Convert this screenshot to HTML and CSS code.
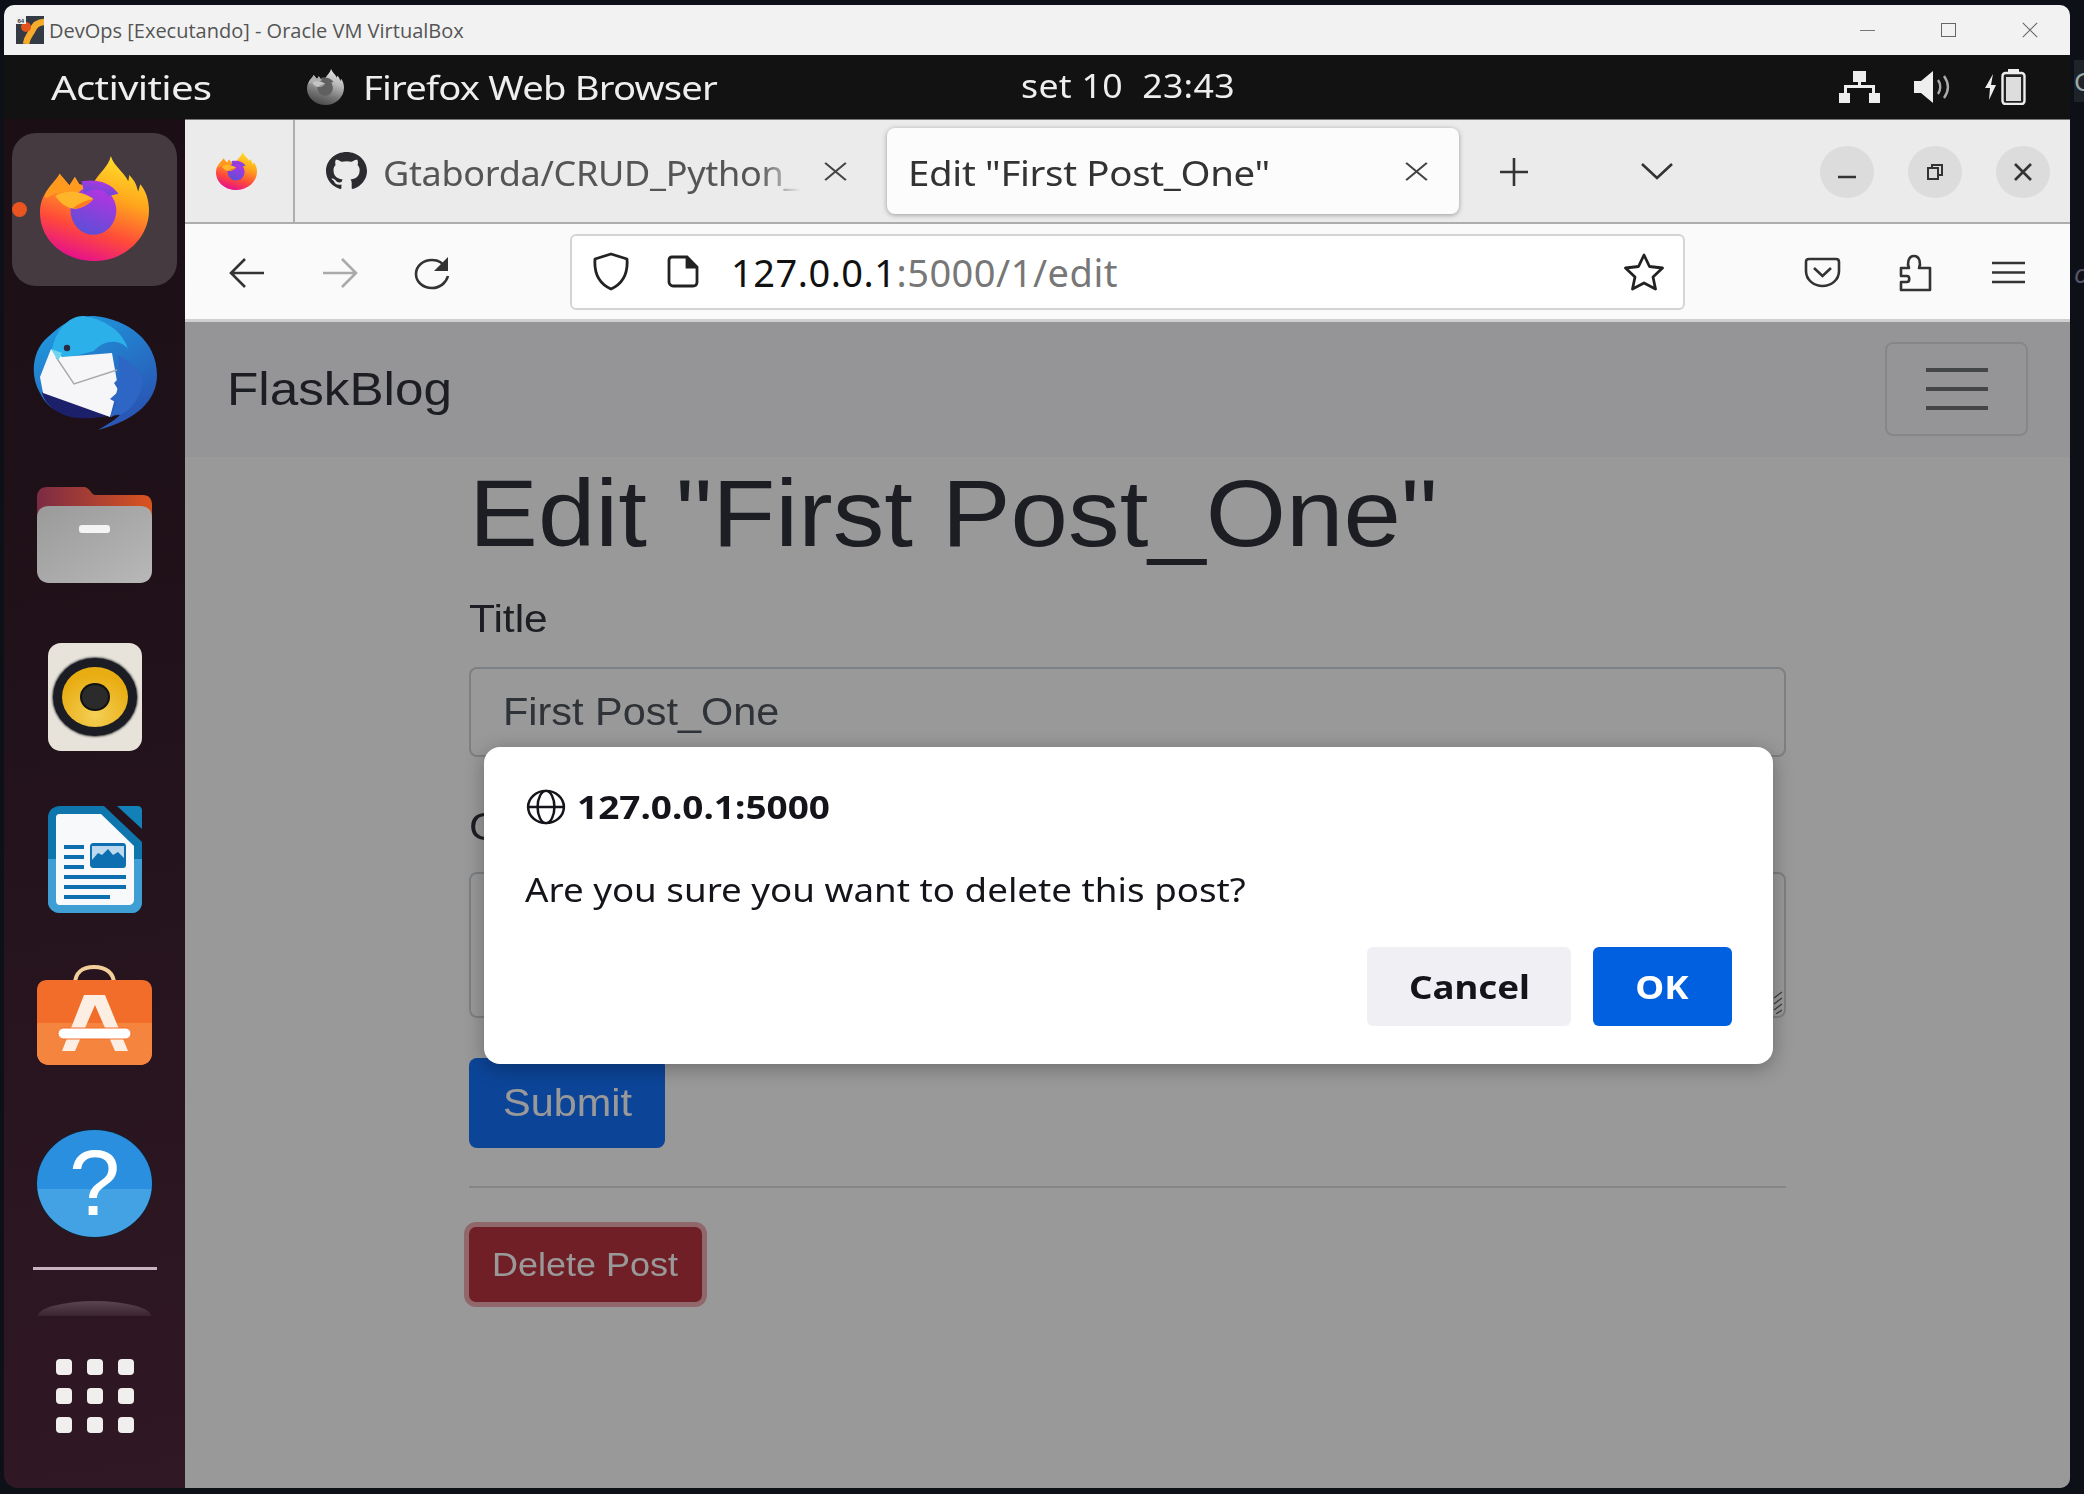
FILE: index.html
```html
<!DOCTYPE html>
<html lang="pt">
<head>
<meta charset="utf-8">
<title>DevOps [Executando] - Oracle VM VirtualBox</title>
<link rel="stylesheet" href="styles.css">
</head>
<body>
<svg class="defs" width="0" height="0" aria-hidden="true">
  <defs>
    <linearGradient id="ffBody" x1="0.75" y1="0" x2="0.4" y2="1">
      <stop offset="0" stop-color="#ffe32a"/><stop offset="0.38" stop-color="#ffa51c"/>
      <stop offset="0.72" stop-color="#ff4a3a"/><stop offset="1" stop-color="#e6128a"/>
    </linearGradient>
    <linearGradient id="ffGlobe" x1="0.7" y1="0" x2="0.3" y2="1">
      <stop offset="0" stop-color="#b833e1"/><stop offset="1" stop-color="#5a4fd6"/>
    </linearGradient>
    <linearGradient id="tbBlue" x1="0.2" y1="0" x2="0.8" y2="1">
      <stop offset="0" stop-color="#1f9be0"/><stop offset="1" stop-color="#2a4fb0"/>
    </linearGradient>
    <linearGradient id="folderTab" x1="0" y1="0" x2="1" y2="0">
      <stop offset="0" stop-color="#7b2b44"/><stop offset="1" stop-color="#d95420"/>
    </linearGradient>
    <linearGradient id="folderBody" x1="0" y1="0" x2="1" y2="1">
      <stop offset="0" stop-color="#9a9a9a"/><stop offset="1" stop-color="#b8b8b8"/>
    </linearGradient>
    <symbol id="firefox" viewBox="0 0 100 100" preserveAspectRatio="none">
      <path fill="url(#ffBody)" d="M65 0C63 10 54 16 49 26L52 30 36 27 32 20 27 28 18 17C16 24 12 27 8 31 2 38 0 46 0 54 0 80 22 100 50 100 78 100 100 78 100 52 100 42 97 33 92 27L90 34C88 24 85 22 82 18L81 24C76 14 68 10 65 0Z"/>
      <path fill="#ff9a1f" d="M18 17C14 24 8 29 5 36 3 44 8 38 14 36 24 33 36 36 48 38L50 32 36 27 32 20 27 28Z"/>
      <ellipse cx="49" cy="52" rx="21" ry="23" fill="url(#ffGlobe)"/>
      <path fill="#ffb52a" d="M14 38C24 32 38 33 49 41 44 47 36 51 30 50 24 49 19 45 14 38Z"/>
      <path fill="#ff7a1f" d="M30 50C36 51 44 47 49 41 40 43 34 46 30 50Z"/>
      <path fill="url(#ffGlobe)" d="M38 24C50 22 64 24 72 36L63 38C58 30 48 30 41 36Z"/>
    </symbol>
    <symbol id="cross" viewBox="0 0 20 20" preserveAspectRatio="none">
      <path d="M1 1 19 19M19 1 1 19" fill="none" stroke="currentColor" stroke-width="2"/>
    </symbol>
  </defs>
</svg>

<div class="backdrop-tag backdrop-tag-top">G</div>
<div class="backdrop-tag backdrop-tag-mid">o</div>

<div class="window">
  <header class="titlebar">
    <svg class="vbox-icon" viewBox="0 0 28 28" aria-hidden="true">
      <rect width="28" height="28" fill="#333a44"/>
      <path d="M28 6C21 6 18 10 16 15 14 19 11 21 10 28" fill="none" stroke="#f6ab2a" stroke-width="6.5"/>
      <circle cx="10" cy="11" r="5" fill="#e2541e"/>
      <rect width="10" height="8" fill="#eee"/>
      <text class="vbox-tag" x="1.500" y="6.500">64</text>
    </svg>
    <span class="titlebar-text">DevOps [Executando] - Oracle VM VirtualBox</span>
    <div class="win-controls">
      <span class="win-min"></span>
      <span class="win-max"></span>
      <svg class="win-close" viewBox="0 0 20 20" aria-hidden="true"><path d="M1 1 19 19M19 1 1 19" fill="none" stroke="#666" stroke-width="1.3"/></svg>
    </div>
  </header>

  <div class="panel">
    <span class="panel-activities">Activities</span>
    <div class="panel-app">
      <svg class="panel-ff" aria-hidden="true"><use href="#firefox"/></svg>
      <span class="panel-app-name">Firefox Web Browser</span>
    </div>
    <span class="panel-clock">set 10&nbsp; 23:43</span>
    <div class="panel-status">
      <svg class="st-net" viewBox="0 0 41 32" aria-hidden="true">
        <path fill="#eee" d="M14 0H27V11H22V14H36V22H41V32H30V22H33V17H8V22H11V32H0V22H5V14H19V11H14Z"/>
      </svg>
      <svg class="st-vol" viewBox="0 0 39 34" aria-hidden="true">
        <path fill="#eee" d="M0 11H7L19 1V33L7 23H0Z"/>
        <path fill="none" stroke="#aaa" stroke-width="2.4" d="M24 10C27 14 27 20 24 24M30 6C35 13 35 21 30 28"/>
      </svg>
      <svg class="st-bat" viewBox="0 0 42 36" aria-hidden="true">
        <path fill="#eee" d="M8 5 0 19H5L4 31 11 16H6Z"/>
        <rect x="17.5" y="4" width="22" height="31" rx="3" fill="#222" stroke="#eee" stroke-width="2.4"/>
        <rect x="23" y="0" width="11" height="4" fill="#eee"/>
        <rect x="21" y="8" width="15" height="24" fill="#ddd"/>
      </svg>
    </div>
  </div>

  <div class="desktop">
    <nav class="dock">
      <div class="dock-slot dock-active">
        <span class="dock-dot"></span>
        <svg class="ic-firefox" aria-hidden="true"><use href="#firefox"/></svg>
      </div>
      <div class="dock-slot dock-thunder">
        <svg class="ic-thunder" viewBox="0 0 125 115" aria-hidden="true">
          <path fill="url(#tbBlue)" d="M62 1C96 4 125 26 125 60 125 85 105 105 66 115 78 108 84 104 88 100 60 102 22 108 8 78 -3 60 1 34 16 22 28 10 44 0 62 1Z"/>
          <path fill="#1c1f6a" d="M10 78C14 92 30 102 46 103 58 104 72 102 78 100L12 74Z"/>
          <path fill="#2bb0ea" d="M20 36C22 18 36 0 52 1 70 4 90 14 96 34 88 24 72 24 62 36L30 44Z"/>
          <path fill="#f6f6f8" d="M8 62 19 34 30 42 80 38 86 72 78 102 11 78Z"/>
          <path fill="none" stroke="#a9a9a9" stroke-width="1.4" d="M24 42 42 69 85 55"/>
          <path fill="#70d4ee" d="M19 34 30 38 26 46Z"/>
          <circle cx="35" cy="33" r="3.2" fill="#2a2a44"/>
          <path fill="#2d66c4" d="M86 40C92 44 103 48 110 62 112 80 98 96 88 100 84 96 80 104 78 102L85 88 78 84 87 76 82 68 88 62Z"/>
        </svg>
      </div>
      <div class="dock-slot dock-files">
        <svg class="ic-folder" viewBox="0 0 115 96" aria-hidden="true">
          <path fill="url(#folderTab)" d="M0 10C0 4 4 0 10 0H46C50 0 52 2 54 5 56 8 58 8 60 8H106C112 8 115 12 115 18V40H0Z"/>
          <path fill="url(#folderBody)" d="M12 19H103C110 19 115 23 115 30V84C115 91 110 96 103 96H12C5 96 0 91 0 84V30C0 23 5 19 12 19Z"/>
          <rect x="42" y="38" width="31" height="8" rx="3" fill="#f4f4f4"/>
        </svg>
      </div>
      <div class="dock-slot dock-rhythm">
        <div class="rhythm-box"><span class="rhythm-ring"><span class="rhythm-cone"><span class="rhythm-cap"></span></span></span></div>
      </div>
      <div class="dock-slot dock-writer">
        <svg class="ic-writer" viewBox="0 0 94 107" aria-hidden="true">
          <path fill="#0e76ad" d="M12 0H56L94 36V96C94 102 90 107 84 107H12C5 107 0 102 0 96V11C0 5 5 0 12 0Z"/>
          <path fill="#3f9fd4" d="M0 53H94V96C94 102 90 107 84 107H12C5 107 0 102 0 96Z"/>
          <path fill="#f7f9fb" d="M12 8H53L86 40V93C86 97 84 99 80 99H12C9 99 8 97 8 94V12C8 9 9 8 12 8Z"/>
          <path fill="#1380b8" d="M69 0H90C92 0 94 2 94 4V23Z"/>
          <g fill="#0e6fb0">
            <rect x="16" y="39" width="20" height="4"/><rect x="16" y="49" width="20" height="4"/><rect x="16" y="59" width="20" height="4"/>
            <rect x="16" y="69" width="62" height="4"/><rect x="16" y="79" width="62" height="4"/><rect x="16" y="89" width="46" height="4"/>
            <path d="M42 41C42 38 43 37 46 37H75C77 37 78 38 78 41V58C78 61 77 62 75 62H46C43 62 42 61 42 58Z"/>
          </g>
          <path fill="#bcd9ee" d="M44 40H76V52L70 46 65 49 60 43 54 49 50 47 44 54Z"/>
        </svg>
      </div>
      <div class="dock-slot dock-soft">
        <svg class="ic-soft" viewBox="0 0 115 100" aria-hidden="true">
          <path fill="none" stroke="#f2cf9a" stroke-width="4" d="M38 19C38 8 45 2 57 2 69 2 77 8 77 19"/>
          <path fill="#f26d2a" d="M10 15H105C111 15 115 19 115 25V88C115 95 110 100 103 100H12C5 100 0 95 0 88V25C0 19 4 15 10 15Z"/>
          <path fill="#f5843f" d="M0 58H115V88C115 95 110 100 103 100H12C5 100 0 95 0 88Z"/>
          <path fill="#fdeee3" d="M47 30H68L91 86H78L58 40 38 86H25Z"/>
          <rect x="21" y="63" width="73" height="11" rx="5.5" fill="#fff" stroke="#f26d2a" stroke-width="1"/>
        </svg>
      </div>
      <div class="dock-slot dock-help">
        <div class="help-ball">?</div>
      </div>
      <div class="dock-divider"></div>
      <div class="dock-arc"></div>
      <div class="dock-grid">
        <i></i><i></i><i></i><i></i><i></i><i></i><i></i><i></i><i></i>
      </div>
    </nav>

    <main class="browser">
      <div class="tabbar">
        <div class="tab-ff">
          <svg class="tab-ff-ic" aria-hidden="true"><use href="#firefox"/></svg>
        </div>
        <div class="tab tab-inactive">
          <svg class="gh" viewBox="0 0 16 16" preserveAspectRatio="none" aria-hidden="true">
            <path fill="#2b2b30" d="M8 0C3.58 0 0 3.58 0 8c0 3.54 2.29 6.53 5.47 7.59.4.07.55-.17.55-.38v-1.49c-2.01.37-2.53-.49-2.69-.94-.09-.23-.48-.94-.82-1.13-.28-.15-.68-.52-.01-.53.63-.01 1.08.58 1.23.82.72 1.21 1.87.87 2.33.66.07-.52.28-.87.51-1.07-1.78-.2-3.64-.89-3.64-3.95 0-.87.31-1.59.82-2.15-.08-.2-.36-1.02.08-2.12 0 0 .67-.21 2.2.82a7.4 7.4 0 0 1 4 0c1.53-1.04 2.2-.82 2.2-.82.44 1.1.16 1.92.08 2.12.51.56.82 1.27.82 2.15 0 3.07-1.87 3.75-3.65 3.95.29.25.54.73.54 1.48v2.2c0 .21.15.46.55.38A8 8 0 0 0 16 8c0-4.42-3.58-8-8-8z"/>
          </svg>
          <span class="tab-title tab-title-fade">Gtaborda/CRUD_Python_</span>
          <svg class="tab-x" aria-hidden="true"><use href="#cross"/></svg>
        </div>
        <div class="tab tab-active">
          <span class="tab-title">Edit "First Post_One"</span>
          <svg class="tab-x" aria-hidden="true"><use href="#cross"/></svg>
        </div>
        <svg class="tab-plus" viewBox="0 0 32 30" aria-hidden="true"><path d="M16 1V29M2 15H30" fill="none" stroke="#333" stroke-width="2.6"/></svg>
        <svg class="tab-chev" viewBox="0 0 34 18" aria-hidden="true"><path d="M2 2 17 16 32 2" fill="none" stroke="#333" stroke-width="2.6"/></svg>
        <div class="tab-btns">
          <span class="tab-btn"><svg viewBox="0 0 24 24" aria-hidden="true"><path d="M3 17H21" stroke="#333" stroke-width="2.6"/></svg></span>
          <span class="tab-btn"><svg viewBox="0 0 24 24" aria-hidden="true"><path d="M5 8H15V19H5ZM9 8V5H19V15H15" fill="none" stroke="#333" stroke-width="2"/></svg></span>
          <span class="tab-btn"><svg viewBox="0 0 24 24" aria-hidden="true"><path d="M4 4 20 20M20 4 4 20" stroke="#333" stroke-width="2.6"/></svg></span>
        </div>
      </div>

      <div class="navbar-moz">
        <svg class="nv nv-back" viewBox="0 0 38 32" aria-hidden="true"><path d="M36 16H3M17 2 3 16 17 30" fill="none" stroke="#333" stroke-width="2.6"/></svg>
        <svg class="nv nv-fwd" viewBox="0 0 38 32" aria-hidden="true"><path d="M2 16H35M21 2 35 16 21 30" fill="none" stroke="#aaa" stroke-width="2.6"/></svg>
        <svg class="nv nv-rel" viewBox="0 0 38 34" aria-hidden="true"><path d="M33 13C30 6 25 4 19 4 10 4 3 10 3 18 3 26 10 32 19 32 27 32 33 27 35 20" fill="none" stroke="#333" stroke-width="2.6"/><path d="M35 1V15H21Z" fill="#333"/></svg>
        <div class="urlbar">
          <svg class="ub-shield" viewBox="0 0 38 39" aria-hidden="true"><path d="M19 2 35 7C36 20 32 31 19 37 6 31 2 20 3 7Z" fill="none" stroke="#222" stroke-width="2.8" stroke-linejoin="round"/></svg>
          <svg class="ub-page" viewBox="0 0 32 33" aria-hidden="true"><path d="M5 2H20L30 12V27C30 29 29 31 26 31H6C4 31 2 29 2 27V5C2 3 3 2 5 2ZM20 2V12H30" fill="none" stroke="#222" stroke-width="2.8"/><path d="M20 2 30 12H20Z" fill="#222"/></svg>
          <span class="url-text"><b>127.0.0.1</b><span class="url-rest">:5000/1/edit</span></span>
          <svg class="ub-star" viewBox="0 0 42 38" aria-hidden="true"><path d="M21 2 26.5 13.5 39.5 15 30 24 32.5 36 21 30 9.5 36 12 24 2.5 15 15.5 13.5Z" fill="none" stroke="#222" stroke-width="2.8" stroke-linejoin="round"/></svg>
        </div>
        <svg class="nv-r nv-pocket" viewBox="0 0 37 31" aria-hidden="true"><path d="M5 2H32C34 2 35 3 35 5V14C35 23 27 29 18.5 29 10 29 2 23 2 14V5C2 3 3 2 5 2Z" fill="none" stroke="#333" stroke-width="2.6"/><path d="M10 11 18.500 19 27 11" fill="none" stroke="#333" stroke-width="2.6"/></svg>
        <svg class="nv-r nv-puzzle" viewBox="0 0 34 38" aria-hidden="true"><path d="M2 14H10C8 10 9 2 15 2 21 2 22 10 20 14H31V36H2V28H8C11 28 11 22 8 22H2Z" fill="none" stroke="#333" stroke-width="2.6" stroke-linejoin="round"/></svg>
        <svg class="nv-r nv-menu" viewBox="0 0 33 23" aria-hidden="true"><path d="M0 2H33M0 11.500H33M0 21H33" stroke="#333" stroke-width="2.6"/></svg>
      </div>

      <div class="page">
        <div class="site-nav">
          <a class="brand"><span class="stretch">FlaskBlog</span></a>
          <button class="toggler" type="button" aria-label="Toggle navigation"><i></i><i></i><i></i></button>
        </div>
        <div class="container">
          <h1><span class="stretch-h1">Edit "First Post_One"</span></h1>
          <div class="field-title"><label class="stretch">Title</label></div>
          <div class="input"><span class="stretch">First Post_One</span></div>
          <div class="field-content"><label class="stretch">Content</label></div>
          <div class="textarea">
            <svg class="resizer" viewBox="0 0 10 24" aria-hidden="true"><path d="M1 8 9 2M1 14 9 8M1 20 9 14M3 24 9 20" stroke="#5f5f61" stroke-width="1.2"/></svg>
          </div>
          <button class="btn btn-primary" type="button"><span class="stretch">Submit</span></button>
          <hr class="rule">
          <button class="btn-danger" type="button"><span class="stretch">Delete Post</span></button>
        </div>

        <div class="overlay"></div>
        <div class="dialog" role="dialog">
          <div class="dialog-host">
            <svg class="globe" viewBox="0 0 38 38" preserveAspectRatio="none" aria-hidden="true"><g fill="none" stroke="#15141a" stroke-width="2.4"><circle cx="19" cy="19" r="17"/><ellipse cx="19" cy="19" rx="8" ry="17"/><path d="M2 19H36"/></g></svg>
            <span class="host-name">127.0.0.1:5000</span>
          </div>
          <p class="dialog-msg"><span class="msg-text">Are you sure you want to delete this post?</span></p>
          <div class="dialog-actions">
            <button class="dlg-btn dlg-cancel" type="button"><span class="dlg-label">Cancel</span></button>
            <button class="dlg-btn dlg-ok" type="button"><span class="dlg-label">OK</span></button>
          </div>
        </div>
      </div>
    </main>
  </div>
</div>
</body>
</html>
```

FILE: styles.css
```css
* { box-sizing: border-box; }
html, body { margin: 0; height: 100%; }
body {
  background: #0d1117;
  overflow: hidden;
  font-family: "Noto Sans", sans-serif;
  position: relative;
  width: 2084px;
  height: 1494px;
}
.defs { position: absolute; }
.backdrop-tag { position: absolute; left: 2074px; color: #9aa; font-size: 26px; overflow: hidden; width: 10px; }
.backdrop-tag-top { top: 60px; height: 42px; background: #1e232a; line-height: 42px; }
.backdrop-tag-mid { top: 255px; font-style: italic; color: #556; }

.window {
  position: absolute;
  left: 4px;
  top: 5px;
  width: 2066px;
  height: 1483px;
  border-radius: 10px 10px 10px 14px;
  overflow: hidden;
  display: flex;
  flex-direction: column;
}

/* VirtualBox title bar */
.titlebar {
  flex: 0 0 50px;
  background: #f2f2f2;
  display: flex;
  align-items: center;
  padding-left: 12px;
}
.vbox-icon { width: 28px; height: 28px; flex: none; }
.vbox-tag { font-family: "Liberation Sans", sans-serif; font-size: 6px; font-weight: 700; fill: #333; }
.titlebar-text {
  margin-left: 5px;
  font-family: "Open Sans", sans-serif;
  font-size: 20px;
  color: #555;
}
.win-controls { margin-left: auto; display: flex; align-items: center; padding-right: 32px; }
.win-min { width: 15px; height: 1px; background: #777; margin-right: 66px; }
.win-max { width: 15px; height: 14px; border: 1px solid #666; margin-right: 66px; }
.win-close { width: 16px; height: 16px; }

/* GNOME panel */
.panel {
  flex: 0 0 64px;
  background: #121212;
  color: #eee;
  display: flex;
  align-items: center;
  font-size: 33px;
  position: relative;
  padding-left: 47px;
}
.panel-activities {
  display: inline-block;
  letter-spacing: -0.6px;
  transform: scaleX(1.22);
  transform-origin: left center;
}
.panel-app { display: flex; align-items: center; margin-left: 125px; gap: 19px; letter-spacing: -0.7px; }
.panel-app-name { display: inline-block; transform: scaleX(1.157); transform-origin: left center; }
.panel-ff { width: 37px; height: 36px; filter: grayscale(1) brightness(1.05); }
.panel-clock {
  position: absolute;
  left: 1017px;
  top: 8px;
  letter-spacing: 0.3px;
  transform: scaleX(1.08);
  transform-origin: left center;
}
.panel-status { margin-left: auto; display: flex; align-items: center; padding-right: 43px; }
.st-net { width: 41px; height: 32px; }
.st-vol { width: 39px; height: 34px; margin-left: 34px; }
.st-bat { width: 42px; height: 36px; margin-left: 32px; }

.desktop { flex: 1; display: flex; min-height: 0; }

/* Dock */
.dock {
  flex: 0 0 181px;
  background: linear-gradient(172deg, #1b0f15 0%, #22121b 45%, #301824 100%);
  display: flex;
  flex-direction: column;
  align-items: center;
  padding-top: 14px;
  position: relative;
}
.dock-slot { display: flex; justify-content: center; align-items: center; flex: none; }
.dock-active {
  width: 165px;
  height: 153px;
  border-radius: 24px;
  background: #443a40;
  position: relative;
  align-self: flex-start;
  margin-left: 8px;
}
.dock-dot { position: absolute; left: 0; top: 69px; width: 15px; height: 15px; border-radius: 50%; background: #e95420; }
.ic-firefox { width: 109px; height: 105px; margin-top: -2px; }
.dock-thunder { margin-top: 29px; }
.ic-thunder { width: 125px; height: 115px; }
.dock-files { margin-top: 57px; }
.ic-folder { width: 115px; height: 96px; }
.dock-rhythm { margin-top: 60px; }
.rhythm-box { width: 94px; height: 108px; border-radius: 13px; background: #e7e3da; display: flex; align-items: center; justify-content: center; }
.rhythm-ring { width: 84px; height: 78px; border-radius: 50%; background: #1c1d24; display: flex; align-items: center; justify-content: center; box-shadow: 0 0 2px 1px #555; }
.rhythm-cone { width: 66px; height: 60px; border-radius: 50%; background: radial-gradient(circle at 50% 80%, #f5cf55, #e8ad12 70%); display: flex; align-items: center; justify-content: center; }
.rhythm-cap { width: 26px; height: 24px; border-radius: 50%; background: #2b2b2b; box-shadow: 0 0 0 2px #111; }
.dock-writer { margin-top: 55px; }
.ic-writer { width: 94px; height: 107px; }
.dock-soft { margin-top: 52px; }
.ic-soft { width: 115px; height: 100px; }
.dock-help { margin-top: 65px; }
.help-ball {
  width: 115px;
  height: 107px;
  border-radius: 50%;
  background: linear-gradient(#2a8fdf 0 55%, #43a2e4 55%);
  color: #fff;
  font-size: 92px;
  line-height: 107px;
  text-align: center;
  box-shadow: 0 0 0 1px #123;
  font-family: "Liberation Sans", sans-serif;
}
.dock-divider { width: 124px; height: 3px; background: #c7b4c0; margin-top: 30px; flex: none; }
.dock-arc {
  width: 113px;
  height: 15px;
  margin-top: 31px;
  border-radius: 50% 50% 0 0 / 100% 100% 0 0;
  background: linear-gradient(#5a4550, #3a2430);
  flex: none;
}
.dock-grid {
  margin-top: 43px;
  display: grid;
  grid-template-columns: repeat(3, 16px);
  grid-auto-rows: 16px;
  column-gap: 15px;
  row-gap: 13px;
}
.dock-grid i { background: #f1eeee; border-radius: 4px; }

/* Firefox */
.browser { flex: 1; display: flex; flex-direction: column; min-width: 0; }
.tabbar {
  flex: 0 0 105px;
  background: #ebebeb;
  border-top: 1px solid #777;
  border-bottom: 2px solid #adadad;
  display: flex;
  align-items: center;
  font-size: 34px;
  color: #3a3a3e;
}
.tab-ff { width: 110px; height: 100%; border-right: 2px solid #adadad; display: flex; align-items: center; justify-content: center; flex: none; padding-right: 6px; }
.tab-ff-ic { width: 41px; height: 38px; }
.tab { display: flex; align-items: center; flex: none; height: 86px; }
.tab-inactive { width: 592px; padding-left: 31px; }
.gh { width: 41px; height: 38px; flex: none; }
.tab-title {
  display: inline-block;
  margin-left: 16px;
  padding-top: 3px;
  letter-spacing: -0.3px;
  white-space: nowrap;
  overflow: hidden;
  transform: scaleX(1.13);
  transform-origin: left center;
}
.tab-title-fade {
  width: 394px;
  margin-right: 47px;
  color: #555;
  transform: scaleX(1.06);
  -webkit-mask-image: linear-gradient(90deg, #000 90%, transparent 100%);
  mask-image: linear-gradient(90deg, #000 90%, transparent 100%);
}
.tab-x { width: 23px; height: 19px; color: #444; flex: none; }
.tab-active {
  width: 572px;
  background: #fcfcfc;
  border-radius: 8px;
  box-shadow: 0 1px 5px rgba(0,0,0,.35);
  padding: 0 31px 0 5px;
  color: #333;
  justify-content: space-between;
}
.tab-plus { width: 32px; height: 30px; margin: 2px 0 0 39px; flex: none; }
.tab-chev { width: 34px; height: 18px; margin-left: 110px; flex: none; }
.tab-btns { margin-left: auto; display: flex; gap: 34px; padding: 2px 20px 0 0; }
.tab-btn { width: 54px; height: 52px; border-radius: 50%; background: #dcdcdc; display: flex; align-items: center; justify-content: center; }
.tab-btn svg { width: 24px; height: 24px; }

.navbar-moz {
  flex: 0 0 98px;
  background: #fafafa;
  border-bottom: 3px solid #cfcfcf;
  display: flex;
  align-items: center;
  padding: 2px 0 0 43px;
}
.nv { flex: none; }
.nv-back, .nv-fwd { width: 38px; height: 32px; }
.nv-fwd { margin-left: 55px; }
.nv-rel { width: 38px; height: 34px; margin-left: 54px; }
.urlbar {
  width: 1115px;
  height: 76px;
  margin-left: 119px;
  margin-top: -2px;
  background: #fff;
  border: 2px solid #d4d4d4;
  border-radius: 6px;
  display: flex;
  align-items: center;
  padding-left: 20px;
  flex: none;
}
.ub-shield { width: 38px; height: 39px; flex: none; }
.ub-page { width: 32px; height: 33px; margin-left: 37px; flex: none; }
.url-text { margin-left: 32px; font-size: 38px; letter-spacing: 0.5px; color: #111; white-space: nowrap; }
.url-text b { font-weight: 400; }
.url-rest { color: #777; }
.ub-star { width: 42px; height: 38px; margin-left: auto; margin-right: 18px; flex: none; }
.nv-r { flex: none; }
.nv-pocket { width: 37px; height: 31px; margin-left: 119px; }
.nv-puzzle { width: 34px; height: 38px; margin-left: 58px; }
.nv-menu { width: 33px; height: 23px; margin-left: 59px; }

/* Page in the browser */
.page { flex: 1; background: #fff; position: relative; min-height: 0; font-family: "Liberation Sans", sans-serif; color: #282c34; }
.stretch { display: inline-block; transform: scaleX(1.09); transform-origin: left center; }
.stretch-h1 { display: inline-block; transform: scaleX(1.087); transform-origin: left center; }
.site-nav {
  height: 135px;
  background: #f8f8fc;
  display: flex;
  align-items: center;
  justify-content: space-between;
  padding: 0 42px 2px;
}
.brand { font-size: 47px; color: #282c34; }
.toggler {
  width: 143px;
  height: 94px;
  border: 2px solid rgba(0,0,0,.1);
  border-radius: 8px;
  background: none;
  display: flex;
  flex-direction: column;
  align-items: center;
  justify-content: center;
  gap: 15px;
  padding: 0;
}
.toggler i { width: 62px; height: 4px; background: rgba(33,37,41,.65); }
.container { margin-left: 284px; width: 1317px; }
h1 { margin: 0; font-size: 95px; font-weight: 400; line-height: 112px; }
.field-title { margin-top: 23px; height: 75px; font-size: 39px; line-height: 54px; }
.input {
  height: 90px;
  border: 2px solid #ced4da;
  border-radius: 8px;
  padding-left: 32px;
  font-size: 38px;
  line-height: 86px;
  color: #495057;
}
.field-content { margin-top: 45px; height: 70px; font-size: 39px; line-height: 50px; }
.textarea { height: 146px; border: 2px solid #ced4da; border-radius: 8px; position: relative; }
.resizer { position: absolute; right: 1px; bottom: 2px; width: 10px; height: 24px; }
.btn {
  display: block;
  margin-top: 40px;
  width: 196px;
  height: 90px;
  border: 0;
  border-radius: 8px;
  font-family: inherit;
  font-size: 38px;
  color: #fff;
  text-align: left;
  padding-left: 34px;
}
.btn-primary { background: #0d6efd; }
.rule { margin: 38px 0 39px; border: 0; border-top: 2px solid #dcdcdc; }
.btn-danger {
  display: block;
  width: 233px;
  height: 75px;
  background: #bb2d3b;
  border: 0;
  border-radius: 7px;
  box-shadow: 0 0 0 5px rgba(225,83,97,.5);
  font-family: inherit;
  font-size: 33px;
  color: #fff;
  text-align: left;
  padding-left: 23px;
}
.overlay { position: absolute; inset: 0; background: rgba(12,12,13,.42); }
.dialog {
  position: absolute;
  left: 299px;
  top: 425px;
  width: 1289px;
  height: 317px;
  background: #fff;
  border-radius: 16px;
  box-shadow: 0 4px 20px rgba(0,0,0,.3);
  padding: 41px 41px 38px 41px;
  display: flex;
  flex-direction: column;
  font-family: "Noto Sans", sans-serif;
  color: #15141a;
}
.dialog-host { display: flex; align-items: center; gap: 11px; font-size: 32px; font-weight: 700; line-height: 38px; padding-left: 1px; }
.host-name { display: inline-block; transform: scaleX(1.155); transform-origin: left center; }
.globe { width: 40px; height: 36px; flex: none; }
.dialog-msg { margin: 42px 0 0; font-size: 33px; line-height: 44px; }
.msg-text { display: inline-block; transform: scaleX(1.113); transform-origin: left center; }
.dialog-actions { margin-top: auto; display: flex; justify-content: flex-end; gap: 22px; }
.dlg-btn { height: 79px; border: 0; border-radius: 6px; font-family: inherit; font-size: 33px; font-weight: 700; }
.dlg-label { display: inline-block; transform: scaleX(1.11); }
.dlg-cancel { width: 204px; background: #f0f0f4; color: #15141a; }
.dlg-ok { width: 139px; background: #0060df; color: #fff; }
```
